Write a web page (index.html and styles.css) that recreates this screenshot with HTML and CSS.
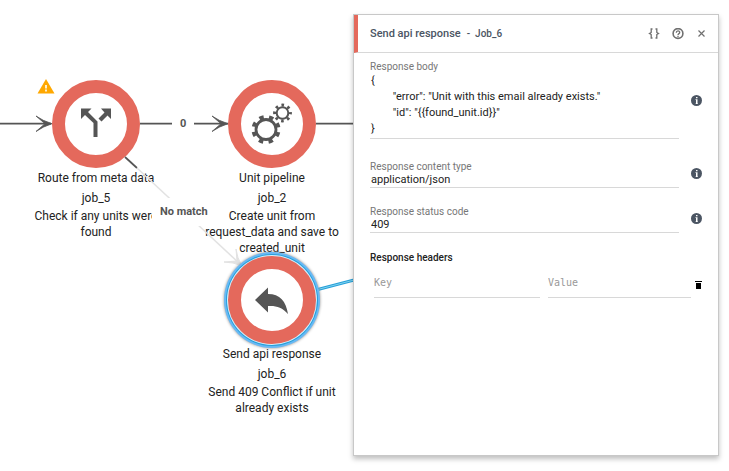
FILE: index.html
```html
<!DOCTYPE html>
<html lang="en">
<head>
    <meta charset="UTF-8">
    <meta name="viewport" content="width=device-width, initial-scale=1.0">
    <title>Send api response</title>
    <link rel="stylesheet" href="styles.css">
</head>
<body>
    <!-- Workflow diagram -->
    <main class="canvas">
        <div class="node node-pipeline">
            <div class="ring">
                <svg width="60" height="60" viewBox="0 0 60 60">
                    <g fill="none" stroke="#555">
                        <circle cx="24" cy="35.500" r="10" stroke-width="2.800"/>
                        <circle cx="24" cy="35.500" r="12.500" stroke-width="4" stroke-dasharray="4.400 5.417" stroke-dashoffset="-2.700"/>
                        <circle cx="40.500" cy="19" r="5.800" stroke-width="2"/>
                        <circle cx="40.500" cy="19" r="7.900" stroke-width="3" stroke-dasharray="2.600 3.605" stroke-dashoffset="1.300"/>
                    </g>
                </svg>
            </div>
            <div class="node-name">Unit pipeline</div>
            <div class="node-id">job_2</div>
            <div class="node-text">Create unit from request_data and save to created_unit</div>
        </div>

        <div class="node node-route">
            <svg class="warning" width="18" height="15" viewBox="0 0 18 15">
                <path d="M9 0L17.500 14.500H.5z" fill="#ffa800"/>
                <path d="M9 6v3.500M9 10.500v2" stroke="#fff" stroke-width="1.600"/>
            </svg>
            <div class="ring">
                <svg width="60" height="60" viewBox="0 0 60 60">
                    <path d="M15 14.500h10.500L22 18l9.500 9.500V43h-4V29L19 21l-4 4z" fill="#555"/>
                    <path d="M35 14.500h10V25l-3.500-3.500-6 6-3-3 6-6z" fill="#555"/>
                </svg>
            </div>
            <div class="node-name">Route from meta data</div>
            <div class="node-id">job_5</div>
            <div class="node-text">Check if any units were found</div>
        </div>

        <svg class="edges" width="400" height="400" viewBox="0 0 400 400" fill="none">
            <g stroke="#555" stroke-width="1.700">
                <path d="M0 123.700H51M140 123.700H228M316 123.700H400"/>
                <path d="M125 157L137 168"/>
            </g>
            <path d="M36 116Q43 121 52 123.700Q43 126.500 36 131.500L45 123.700z" fill="#555" stroke="#555" stroke-width=".8"/>
            <path d="M212 116Q219 121 228 123.700Q219 126.500 212 131.500L221 123.700z" fill="#555" stroke="#555" stroke-width=".8"/>
            <path d="M137 168L240 264" stroke="#e2e2e2" stroke-width="1.500"/>
            <path d="M236 249Q237 258 242 266Q233 262 224 262L237 261z" fill="#e2e2e2" stroke="#e2e2e2"/>
            <path d="M314 290.500L400 268" stroke="#269fd8" stroke-width="3"/>
            <path d="M314 290.500L400 268" stroke="#80d4f0" stroke-width="1"/>
        </svg>
        <span class="edge-label label-zero">0</span>
        <span class="edge-label label-no-match">No match</span>

        <div class="node node-response">
            <div class="ring selected">
                <svg width="60" height="60" viewBox="0 0 60 60">
                    <path d="M13 30L26 17.500V24C38 24 44 31 46 44C40 37 34 35.500 26 36v6.500z" fill="#555"/>
                </svg>
            </div>
            <div class="node-name">Send api response</div>
            <div class="node-id">job_6</div>
            <div class="node-text">Send 409 Conflict if unit already exists</div>
        </div>
    </main>

    <!-- Settings of the selected job -->
    <section class="panel">
        <header class="panel-header">
            <h1>Send api response</h1>
            <span class="job-id">- &nbsp;Job_6</span>
            <div class="actions">
                <button type="button" aria-label="Code">
                    <svg width="12" height="12" viewBox="0 0 12 12" fill="none" stroke="#707070" stroke-width="1.300">
                        <path d="M4.500 1H3.200V4.500L1.500 5.500L3.200 6.500V10H4.500M7.500 1H8.800V4.500L10.500 5.500L8.800 6.500V10H7.500"/>
                    </svg>
                </button>
                <button type="button" aria-label="Help">
                    <svg width="12" height="12" viewBox="0 0 12 12" fill="none" stroke="#707070" stroke-width="1.600">
                        <circle cx="6" cy="5.500" r="4.900"/>
                        <path d="M4.300 4.700C4.300 2.400 7.700 2.400 7.700 4.500C7.700 5.700 6 5.600 6 7M6 7.700v1.200" stroke-width="1.300"/>
                    </svg>
                </button>
                <button type="button" aria-label="Close">
                    <svg width="12" height="12" viewBox="0 0 12 12" stroke="#707070" stroke-width="1.200">
                        <path d="M2.500 2.500L8.500 8.500M8.500 2.500L2.500 8.500"/>
                    </svg>
                </button>
            </div>
        </header>

        <form class="fields">
            <div class="field">
                <div class="control">
                    <label for="body">Response body</label>
                    <textarea id="body" rows="4" spellcheck="false">{
&#9;"error": "Unit with this email already exists."
&#9;"id": "{{found_unit.id}}"
}</textarea>
                </div>
                <svg class="info" width="12" height="12" viewBox="0 0 12 12">
                    <circle cx="5.500" cy="6.500" r="5.500" fill="#4b5563"/>
                    <path d="M5 3h1.500v1.300H5zM4.500 5.300h2V9.500H7v.5H4.500v-.5H5V6h-.5z" fill="#fff"/>
                </svg>
            </div>

            <div class="field">
                <div class="control">
                    <label for="type">Response content type</label>
                    <input id="type" type="text" value="application/json">
                </div>
                <svg class="info" width="12" height="12" viewBox="0 0 12 12">
                    <circle cx="5.500" cy="6.500" r="5.500" fill="#4b5563"/>
                    <path d="M5 3h1.500v1.300H5zM4.500 5.300h2V9.500H7v.5H4.500v-.5H5V6h-.5z" fill="#fff"/>
                </svg>
            </div>

            <div class="field">
                <div class="control">
                    <label for="status">Response status code</label>
                    <input id="status" type="text" value="409">
                </div>
                <svg class="info" width="12" height="12" viewBox="0 0 12 12">
                    <circle cx="5.500" cy="6.500" r="5.500" fill="#4b5563"/>
                    <path d="M5 3h1.500v1.300H5zM4.500 5.300h2V9.500H7v.5H4.500v-.5H5V6h-.5z" fill="#fff"/>
                </svg>
            </div>

            <h2>Response headers</h2>
            <div class="header-row">
                <input class="key" type="text" placeholder="Key" aria-label="Key">
                <input class="value" type="text" placeholder="Value" aria-label="Value">
                <button type="button" aria-label="Delete">
                    <svg width="7" height="8" viewBox="0 0 7 8">
                        <path d="M0 0h7v1H0zM1 2h5v6H1z" fill="#000"/>
                    </svg>
                </button>
            </div>
        </form>
    </section>
</body>
</html>
```

FILE: styles.css
```css
* {
    margin: 0;
    padding: 0;
    box-sizing: border-box;
}

body {
    display: flex;
    min-height: 100vh;
    padding: 14px 10px 15px 353px;
    background-color: #fff;
    color: #222;
    font-family: Roboto, "Liberation Sans", sans-serif;
}

svg {
    display: block;
}

/* Diagram */
.canvas {
    position: absolute;
    inset: 0;
    overflow: hidden;
}

.node {
    position: absolute;
    display: flex;
    flex-direction: column;
    align-items: center;
    width: 136px;
    font-size: 12px;
    line-height: 20px;
    text-align: center;
}

.node-route {
    left: 28px;
    top: 80px;
}

.node-pipeline {
    left: 204px;
    top: 80px;
}

.node-response {
    left: 204px;
    top: 256px;
}

.node-text {
    line-height: 16px;
}

.ring {
    display: flex;
    align-items: center;
    justify-content: center;
    width: 88px;
    height: 88px;
    border: 13px solid #e4695c;
    border-radius: 50%;
    background-color: #fff;
}

.ring.selected {
    box-shadow: 0 0 0 1px #d5eefc, 0 0 0 2px #269fd8, 0 0 0 4px #68b9f5, 0 0 3px 4px #888;
}

.warning {
    position: absolute;
    left: 9px;
    top: -1px;
}

.edges {
    position: absolute;
    left: 0;
    top: 0;
}

.edge-label {
    position: absolute;
    padding: 0 8px;
    background-color: #fff;
    color: #555;
    font-size: 11px;
    font-weight: 700;
    line-height: 28px;
}

.label-zero {
    left: 172px;
    top: 110px;
}

.label-no-match {
    left: 152px;
    top: 198px;
}

/* Side panel */
.panel {
    position: relative;
    flex: 1;
    border: 1px solid #c8c8c8;
    background-color: #fff;
    box-shadow: 0 3px 5px rgba(0, 0, 0, 0.25);
}

.panel-header {
    display: flex;
    align-items: center;
    height: 38px;
    padding: 0 10px 0 12px;
    border-left: 4px solid #e4695c;
    border-bottom: 1px solid #d8d8d8;
    color: #4b5563;
}

h1 {
    font-size: 11px;
    font-weight: 500;
}

.job-id {
    margin-left: 6px;
    font-size: 10px;
    font-weight: 500;
}

.actions {
    display: flex;
    gap: 12px;
    margin-left: auto;
}

button {
    border: none;
    background: none;
    cursor: pointer;
}

.fields {
    padding: 8px 16px;
}

.field {
    display: flex;
    align-items: center;
    gap: 12px;
    margin-bottom: 22px;
}

.field + .field {
    margin-bottom: 18px;
}

.control {
    flex: 1;
}

label {
    display: block;
    color: #777;
    font-size: 10px;
    line-height: 12px;
}

input,
textarea {
    display: block;
    width: 100%;
    border: none;
    border-bottom: 1px solid #d8d8d8;
    outline: none;
    background: none;
    color: #222;
    font-family: inherit;
    font-size: 11px;
    line-height: 16px;
}

input {
    height: 15px;
    padding: 0 1px 1px;
}

textarea {
    height: 66px;
    padding: 0 1px;
    resize: none;
    overflow: hidden;
}

.info {
    margin-right: -1px;
}

.field + .field .info {
    margin-bottom: 4px;
}

h2 {
    font-size: 10px;
    font-weight: 500;
    line-height: 14px;
}

.header-row {
    display: flex;
    align-items: center;
    gap: 4px;
    margin: 6px 0 0 4px;
}

.header-row input {
    min-width: 0;
    height: 27px;
    padding: 0 0 4px;
    font-family: "DejaVu Sans Mono", monospace;
    font-size: 10px;
}

.header-row .key {
    flex: 166 1 0;
    margin-right: 4px;
}

.header-row .value {
    flex: 143 1 0;
}

.header-row input::placeholder {
    color: #999;
    opacity: 1;
}
```
